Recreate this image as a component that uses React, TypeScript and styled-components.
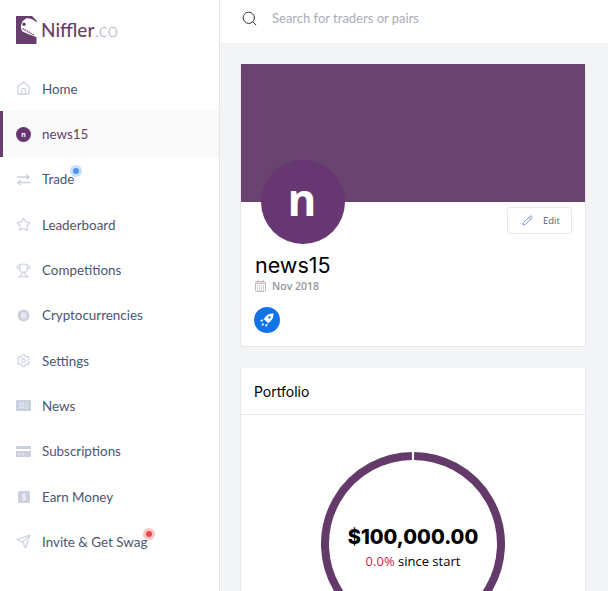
import React from 'react'
import styled, { createGlobalStyle } from 'styled-components'
import { Home, Pencil, Search, Send, Settings, Star, Trophy } from 'lucide-react'

const GlobalStyle = createGlobalStyle`
  html, body {
    margin: 0;
    height: 100%;
    overflow: hidden;
    background: #f3f4f6;
  }
  * { box-sizing: border-box; }
`

const Page = styled.div`
  display: flex;
  width: 608px;
  height: 591px;
  overflow: hidden;
  font-family: 'Open Sans', sans-serif;
`

const Sidebar = styled.aside`
  width: 220px;
  flex: none;
  background: #fff;
  border-right: 1px solid #e3e5ea;
`

const LogoRow = styled.div`
  display: flex;
  align-items: center;
  gap: 4px;
  height: 66.2px;
  padding: 0 0 7px 16px;
`

const LogoText = styled.span`
  font-family: 'Lato', sans-serif;
  font-size: 19px;
  line-height: 1;
  font-weight: 500;
  color: #673e6d;
  span {
    font-weight: 300;
    color: #b9a5bd;
  }
`

const NavItem = styled.div<{ $active?: boolean }>`
  display: flex;
  align-items: center;
  height: 45.3px;
  padding-left: ${p => (p.$active ? '13px' : '16px')};
  gap: 11px;
  background: ${p => (p.$active ? '#fafafa' : 'transparent')};
  border-left: ${p => (p.$active ? '3px solid #673e6d' : 'none')};
  color: ${p => (p.$active ? '#673e6d' : '#4a5672')};
  font-family: 'Lato', sans-serif;
  font-size: 13.4px;
`

const NavIcon = styled.span`
  width: 15px;
  height: 15px;
  flex: none;
  display: flex;
  align-items: center;
  justify-content: center;
  color: #cbd0de;
`

const NavLabel = styled.span`
  position: relative;
  white-space: nowrap;
`

const Dot = styled.span<{ $color: string; $halo: string }>`
  position: absolute;
  top: -6px;
  right: -8px;
  width: 12px;
  height: 12px;
  border-radius: 50%;
  background: ${p => p.$halo};
  &::after {
    content: '';
    position: absolute;
    left: 3px;
    top: 3px;
    width: 6px;
    height: 6px;
    border-radius: 50%;
    background: ${p => p.$color};
  }
`

const MiniAvatar = styled.span`
  width: 15px;
  height: 15px;
  border-radius: 50%;
  background: #673672;
  color: #fff;
  font-family: 'Open Sans', sans-serif;
  font-size: 7px;
  font-weight: 700;
  display: flex;
  align-items: center;
  justify-content: center;
`

const Main = styled.main`
  flex: 1;
  min-width: 0;
`

const TopBar = styled.div`
  display: flex;
  align-items: center;
  gap: 14px;
  height: 43px;
  padding: 0 0 7px 21px;
  background: #fff;
  color: #333;
`

const SearchText = styled.span`
  font-family: 'Lato', sans-serif;
  font-size: 13px;
  color: #a9adb9;
`

const Content = styled.div`
  display: flex;
  flex-direction: column;
  gap: 21px;
  padding: 21px 22px 0 20px;
`

const Card = styled.section`
  background: #fff;
  border: 1px solid #e6e8ec;
  border-top: none;
  border-radius: 2px;
`

const Cover = styled.div`
  height: 138px;
  background: #68446e;
`

const ProfileBody = styled.div`
  padding: 0 13px 13px 14px;
`

const ProfileTop = styled.div`
  display: flex;
  justify-content: space-between;
  align-items: flex-start;
`

const Avatar = styled.div`
  width: 84px;
  height: 84px;
  margin: -42px 0 0 6px;
  border-radius: 50%;
  background: #683672;
  color: #fff;
  font-size: 44px;
  font-weight: 700;
  display: flex;
  align-items: center;
  justify-content: center;
  padding: 0 2px 6px 0;
`

const EditButton = styled.button`
  display: flex;
  align-items: center;
  gap: 10px;
  width: 65px;
  height: 27px;
  margin-top: 5px;
  padding: 0 0 0 14px;
  background: #fff;
  border: 1px solid #e6e8ec;
  border-radius: 3px;
  font-family: 'Open Sans', sans-serif;
  font-size: 9.5px;
  color: #555c70;
  svg { color: #4f78b8; }
`

const Name = styled.h1`
  margin: 7px 0 0;
  font-family: 'Inter', sans-serif;
  font-size: 21.5px;
  line-height: 28px;
  font-weight: 400;
  color: #000;
`

const DateRow = styled.div`
  display: flex;
  align-items: center;
  gap: 6px;
  height: 14px;
  font-size: 10.5px;
  font-weight: 600;
  color: #8f96a3;
`

const Badge = styled.div`
  width: 26px;
  height: 26px;
  margin: 14px 0 0 -1px;
  border-radius: 50%;
  background: #1273e6;
  display: flex;
  align-items: center;
  justify-content: center;
`

const CardHeader = styled.div`
  height: 47px;
  padding: 0 13px;
  display: flex;
  align-items: center;
  border-bottom: 1px solid #e6e8ec;
  font-family: 'Inter', sans-serif;
  font-size: 14px;
  font-weight: 400;
  color: #000;
`

const ChartArea = styled.div`
  position: relative;
  height: 300px;
  padding-top: 37px;
  display: flex;
  justify-content: center;
`

const ChartCenter = styled.div`
  position: absolute;
  top: 108px;
  left: 0;
  right: 0;
  text-align: center;
  color: #000;
`

const Total = styled.div`
  font-family: 'Inter', sans-serif;
  font-size: 20px;
  line-height: 28px;
  font-weight: 800;
`

const SinceStart = styled.div`
  font-size: 13px;
  line-height: 18px;
  margin-top: 1px;
  span { color: #d2234a; }
`

const CoinIcon = () => (
  <svg width="15" height="15" viewBox="0 0 15 15">
    <circle cx="7.5" cy="7.5" r="6" fill="currentColor" />
    <path d="M6 5h2.2a1.2 1.2 0 0 1 0 2.5H6h2.5a1.3 1.3 0 0 1 0 2.6H6z" fill="none" stroke="#fff" strokeWidth="0.9" />
  </svg>
)

const TradeIcon = () => (
  <svg width="15" height="15" viewBox="0 0 15 15" fill="none" stroke="currentColor" strokeWidth="1.4">
    <path d="M1 5h12M10.500 2.500 13 5l-2.500 2.500M14 10.500H2M4.500 8 2 10.500 4.500 13" />
  </svg>
)

const NewsIcon = () => (
  <svg width="15" height="11" viewBox="0 0 15 11">
    <rect width="15" height="11" rx="1" fill="currentColor" />
    <path d="M4 3h3v5H4zM9 3h3M9 5.500h3M9 8h3" fill="none" stroke="#eef0f5" strokeWidth="0.8" />
  </svg>
)

const CardIcon = () => (
  <svg width="15" height="11" viewBox="0 0 15 11">
    <path d="M1 0h13a1 1 0 0 1 1 1v2H0V1a1 1 0 0 1 1-1zM0 5h15v5a1 1 0 0 1-1 1H1a1 1 0 0 1-1-1z" fill="currentColor" />
    <path d="M2 8h3M6 8h2" stroke="#fff" strokeWidth="0.8" />
  </svg>
)

const DollarIcon = () => (
  <svg width="12" height="12" viewBox="0 0 12 12">
    <rect width="12" height="12" rx="1" fill="currentColor" />
    <path d="M7.800 4.200C7.500 3.500 6.900 3.200 6 3.200c-1 0-1.700.5-1.700 1.300 0 1.800 3.500.9 3.500 2.800 0 .8-.8 1.400-1.800 1.400-1 0-1.700-.4-2-1.200M6 2.300v7.400" fill="none" stroke="#fff" strokeWidth="0.8" />
  </svg>
)

const CalendarIcon = () => (
  <svg width="11" height="12" viewBox="0 0 11 12" fill="none">
    <rect x="0.500" y="1.500" width="10" height="10" rx="1" stroke="#b8bcc4" />
    <path d="M0.500 2.500h10V4h-10z" fill="#e3b9b0" />
    <path d="M3 0v2M8 0v2" stroke="#b8bcc4" />
    <path d="M2 6h7M2 8h7M2 10h7" stroke="#9da2ac" strokeDasharray="1 1" />
  </svg>
)

const RocketIcon = () => (
  <svg width="16" height="16" viewBox="0 0 16 16" fill="#fff">
    <path d="M14.500 1.500c-3.300-.2-6 1-8 3.200L4.800 6.900l4.300 4.300 2.200-1.700c2.200-2 3.400-4.700 3.200-8zM10.500 4.200a1.200 1.200 0 1 1 0 2.400 1.200 1.200 0 0 1 0-2.400z" />
    <path d="M4.300 7.300 1.800 8l-.6 1.300 2.300.3zM8.700 11.700 8 14.200l-1.300.6-.3-2.300zM3.600 10.700l1.700 1.700-2.800 1.900z" />
  </svg>
)

const Logo = () => (
  <svg width="21" height="28" viewBox="0 0 21 28">
    <path fill="#673e6d" d="M0 0h16l4.500 4.500V28H0z" />
    <path fill="#fff" d="M10.500 2.300C13.500 2.200 16 3 18 4.300L21 7v14l-1 0-5.300-2-8-3.300C5.500 14 4.600 12 5 10c.3-2 1-4 1.700-5z" />
    <circle cx="8" cy="8.300" r="1.700" fill="#673e6d" />
    <path d="M6.500 12.500 18 19" stroke="#673e6d" strokeWidth="1.200" strokeDasharray="1.500 0.800" />
  </svg>
)

const Ring = () => {
  const r = 88
  const c = 92
  const gap = 1.1 / r
  const x = r * Math.sin(gap)
  const y = c - r * Math.cos(gap)
  return (
    <svg width="184" height="184" viewBox="0 0 184 184" fill="none" stroke="#643a6b" strokeWidth="8">
      <path d={`M${c + x} ${y}A${r} ${r} 0 1 1 ${c - x} ${y}`} />
    </svg>
  )
}

const navItems: { label: string; icon: React.ReactNode; active?: boolean; dot?: 'blue' | 'red' }[] = [
  { label: 'Home', icon: <Home size={15} strokeWidth={1.8} /> },
  { label: 'news15', icon: <MiniAvatar>n</MiniAvatar>, active: true },
  { label: 'Trade', icon: <TradeIcon />, dot: 'blue' },
  { label: 'Leaderboard', icon: <Star size={15} strokeWidth={1.8} /> },
  { label: 'Competitions', icon: <Trophy size={15} strokeWidth={1.8} /> },
  { label: 'Cryptocurrencies', icon: <CoinIcon /> },
  { label: 'Settings', icon: <Settings size={15} strokeWidth={1.8} /> },
  { label: 'News', icon: <NewsIcon /> },
  { label: 'Subscriptions', icon: <CardIcon /> },
  { label: 'Earn Money', icon: <DollarIcon /> },
  { label: 'Invite & Get Swag', icon: <Send size={15} strokeWidth={1.8} />, dot: 'red' },
]

export default function App() {
  return (
    <Page>
      <GlobalStyle />
      <Sidebar>
        <LogoRow>
          <Logo />
          <LogoText>Niffler<span>.co</span></LogoText>
        </LogoRow>
        {navItems.map(item => (
          <NavItem key={item.label} $active={item.active}>
            <NavIcon>{item.icon}</NavIcon>
            <NavLabel>
              {item.label}
              {item.dot === 'blue' && <Dot $color="#4a97f5" $halo="#c9def9" />}
              {item.dot === 'red' && <Dot $color="#f04848" $halo="#fac6c6" />}
            </NavLabel>
          </NavItem>
        ))}
      </Sidebar>
      <Main>
        <TopBar>
          <Search size={17} strokeWidth={1.4} />
          <SearchText>Search for traders or pairs</SearchText>
        </TopBar>
        <Content>
          <Card>
            <Cover />
            <ProfileBody>
              <ProfileTop>
                <Avatar>n</Avatar>
                <EditButton>
                  <Pencil size={11} strokeWidth={1.5} />
                  Edit
                </EditButton>
              </ProfileTop>
              <Name>news15</Name>
              <DateRow>
                <CalendarIcon />
                Nov 2018
              </DateRow>
              <Badge><RocketIcon /></Badge>
            </ProfileBody>
          </Card>
          <Card>
            <CardHeader>Portfolio</CardHeader>
            <ChartArea>
              <Ring />
              <ChartCenter>
                <Total>$100,000.00</Total>
                <SinceStart><span>0.0%</span> since start</SinceStart>
              </ChartCenter>
            </ChartArea>
          </Card>
        </Content>
      </Main>
    </Page>
  )
}
